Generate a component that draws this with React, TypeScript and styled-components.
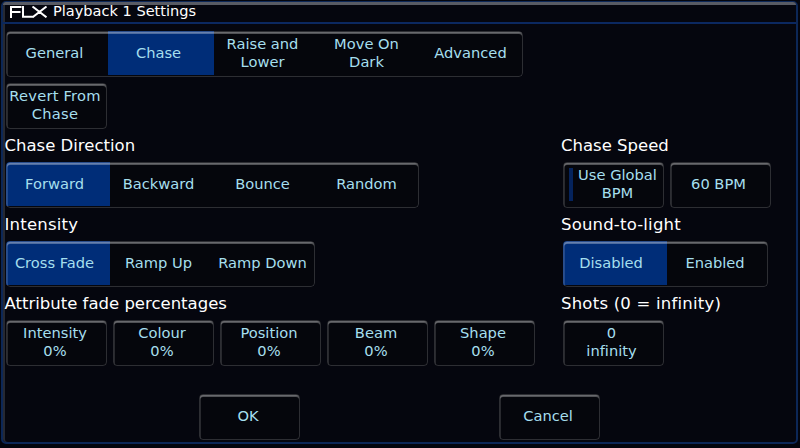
import React from "react";
import styled, { createGlobalStyle, css } from "styled-components";

const Global = createGlobalStyle`
  * { box-sizing: border-box; }
  body { margin: 0; background: #03050d; overflow: hidden; }
`;

const Screen = styled.div`
  width: 800px;
  height: 448px;
  padding: 1px 2px 4px 1px;
  background: #03050d;
  font-family: "DejaVu Sans", sans-serif;
  font-variant-ligatures: none;
`;

const Window = styled.main`
  height: 443px;
  border: 2px solid #0c2757;
  border-top-width: 1px;
  border-radius: 5px;
  background: #05060e;
  box-shadow: inset 2px 0 #262932;
`;

const TitleBar = styled.header`
  display: flex;
  height: 22px;
  padding: 0 0 0 7px;
  border-top: 3px solid #585b64;
  border-bottom: 2px solid #0b2860;
  border-radius: 3px 3px 0 0;
`;

const Logo = styled.svg`
  width: 38px;
  height: 12px;
  margin-top: 1px;
  fill: none;
  stroke: #fff;
  stroke-width: 2;
`;

const Title = styled.h1`
  margin: -3px 0 0 5px;
  font-size: 14.55px;
  line-height: 18px;
  font-weight: 400;
  color: #fff;
`;

const Body = styled.div`
  padding: 7px 0 0 3px;
`;

const Columns = styled.div`
  display: grid;
  grid-template-columns: 556.5px 1fr;
`;

const Column = styled.div``;

const Heading = styled.h2<{ $tracking?: number }>`
  height: 33px;
  margin: 0 0 0 -1.5px;
  padding: 7px 0 0;
  font-size: 16.5px;
  line-height: 20px;
  font-weight: 400;
  letter-spacing: ${(p) => p.$tracking ?? 0}px;
  color: #fff;
  white-space: nowrap;
`;

const Row = styled.div<{ $top?: number }>`
  display: flex;
  gap: 6px;
  height: 46px;
  margin-top: ${(p) => p.$top ?? 0}px;
`;

const bevel = css`
  position: relative;
  height: 46px;
  border-radius: 4px;
  &::after {
    content: "";
    position: absolute;
    inset: 0;
    border: 1px solid rgba(255, 255, 255, 0.16);
    border-radius: 4px;
    box-shadow: inset 0 2px rgba(255, 255, 255, 0.3), inset 1px 1px rgba(255, 255, 255, 0.14);
    pointer-events: none;
  }
`;

const labelText = css`
  font: 14.67px/18px "DejaVu Sans", sans-serif;
  color: #a5dfee;
  text-align: center;
  white-space: pre;
  font-variant-ligatures: none;
`;

const Button = styled.button<{ $indicator?: boolean; $tracking?: number }>`
  ${bevel}
  ${labelText}
  display: flex;
  align-items: center;
  justify-content: center;
  flex: none;
  width: 101px;
  padding: 0 3px 3px ${(p) => (p.$indicator ? 12 : 0)}px;
  border: 0;
  background: #05060c;
  letter-spacing: ${(p) => p.$tracking ?? 0}px;
`;

const Indicator = styled.span`
  position: absolute;
  left: 6px;
  top: 6px;
  width: 4px;
  height: 33px;
  background: #05235c;
`;

const Segments = styled.div`
  ${bevel}
  display: flex;
  overflow: hidden;
  background: #05060c;
`;

const Segment = styled.button<{ $on?: boolean; $first?: boolean; $last?: boolean }>`
  ${labelText}
  display: flex;
  align-items: center;
  justify-content: center;
  width: ${(p) => (p.$last ? 101 : p.$first ? 104 : 106)}px;
  height: 44px;
  margin-left: ${(p) => (p.$first || p.$last ? 0 : -2)}px;
  padding: 0 ${(p) => (p.$last ? 4 : 7)}px 1px ${(p) => (p.$first || p.$last ? 0 : 2)}px;
  border: 0;
  background: ${(p) => (p.$on ? "#002d78" : "transparent")};
`;

const Footer = styled.footer`
  display: flex;
  gap: 199px;
  padding: 28px 0 0 193px;
`;

function SegmentGroup({ items, selected }: { items: string[]; selected: number }) {
  return (
    <Segments>
      {items.map((item, i) => (
        <Segment key={item} $on={i === selected} $first={i === 0} $last={i === items.length - 1}>
          {item}
        </Segment>
      ))}
    </Segments>
  );
}

const attributes = ["Intensity", "Colour", "Position", "Beam", "Shape"];

export default function App() {
  return (
    <Screen>
      <Global />
      <Window>
        <TitleBar>
          <Logo viewBox="0 0 38 12" aria-label="FLX">
            <path d="M1 12V1H11.5M1 6H10.5M13 0V10.8H23M22.5 0.5L36.5 11.3M36.5 0.5L22.5 11.3" />
          </Logo>
          <Title>Playback 1 Settings</Title>
        </TitleBar>
        <Body>
          <Row>
            <SegmentGroup items={["General", "Chase", "Raise and\nLower", "Move On\nDark", "Advanced"]} selected={1} />
          </Row>
          <Row $top={6}>
            <Button $tracking={0.22}>{"Revert From\nChase"}</Button>
          </Row>
          <Columns>
            <Column>
              <Heading>Chase Direction</Heading>
              <Row>
                <SegmentGroup items={["Forward", "Backward", "Bounce", "Random"]} selected={0} />
              </Row>
              <Heading $tracking={0.2}>Intensity</Heading>
              <Row>
                <SegmentGroup items={["Cross Fade", "Ramp Up", "Ramp Down"]} selected={0} />
              </Row>
              <Heading>Attribute fade percentages</Heading>
              <Row>
                {attributes.map((name) => (
                  <Button key={name}>{`${name}\n0%`}</Button>
                ))}
              </Row>
            </Column>
            <Column>
              <Heading>Chase Speed</Heading>
              <Row>
                <Button $indicator>
                  <Indicator />
                  {"Use Global\nBPM"}
                </Button>
                <Button>60 BPM</Button>
              </Row>
              <Heading $tracking={0.18}>Sound-to-light</Heading>
              <Row>
                <SegmentGroup items={["Disabled", "Enabled"]} selected={0} />
              </Row>
              <Heading $tracking={0.22}>Shots (0 = infinity)</Heading>
              <Row>
                <Button>{"0\ninfinity"}</Button>
              </Row>
            </Column>
          </Columns>
          <Footer>
            <Button>OK</Button>
            <Button>Cancel</Button>
          </Footer>
        </Body>
      </Window>
    </Screen>
  );
}
